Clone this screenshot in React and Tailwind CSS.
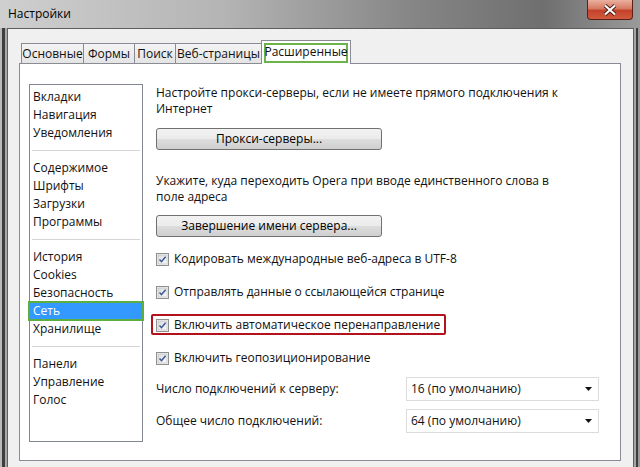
import React from "react";

const sidebarGroups = [
  ["Вкладки", "Навигация", "Уведомления"],
  ["Содержимое", "Шрифты", "Загрузки", "Программы"],
  ["История", "Cookies", "Безопасность", "Сеть", "Хранилище"],
  ["Панели", "Управление", "Голос"],
];

const tabs = [
  { label: "Основные", cls: "w-[63px] border-l" },
  { label: "Формы", cls: "w-[51px]" },
  { label: "Поиск", cls: "w-[41px]" },
  { label: "Веб-страницы", cls: "w-[86px]" },
];

const CheckBox = () => (
  <svg width="13" height="13" viewBox="0 0 13 13" className="shrink-0">
    <defs>
      <linearGradient id="cbg" x1="0" y1="0" x2="1" y2="1">
        <stop offset="0" stopColor="#d9dadb" />
        <stop offset="1" stopColor="#fbfbfb" />
      </linearGradient>
    </defs>
    <rect x="0.5" y="0.5" width="12" height="12" fill="#f4f4f4" stroke="#8e8f8f" />
    <rect x="2" y="2" width="9" height="9" fill="url(#cbg)" stroke="#b7b9bc" strokeWidth="0.6" />
    <path d="M3.5 6.5 L5.5 8.7 L9.6 3.8" fill="none" stroke="#3a5796" strokeWidth="1.5" />
  </svg>
);

const Button = ({ children }) => (
  <button className="flex h-[22px] w-[226px] items-center justify-center rounded-[3px] border border-[#707070] bg-[linear-gradient(to_bottom,#f2f2f2_0%,#ebebeb_50%,#dddddd_51%,#cfcfcf_100%)] text-[12px] text-black">
    {children}
  </button>
);

const CheckRow = ({ label, className, highlight }) => (
  <div className={"relative flex h-[20px] items-center gap-[5px] self-start " + className}>
    <CheckBox />
    <span>{label}</span>
    {highlight && (
      <div className="absolute -left-[5px] -right-[6px] -top-px h-[21px] rounded-[2px] border-2 border-[#b3121c]" />
    )}
  </div>
);

const SelectRow = ({ label, value, className }) => (
  <div className={"flex h-[24px] items-center " + className}>
    <span className="w-[250px]">{label}</span>
    <div className="flex h-[24px] w-[193px] items-center justify-between border border-[#dcdcdc] bg-white pl-[4px] pr-[6px]">
      <span>{value}</span>
      <svg width="7" height="4" viewBox="0 0 7 4">
        <path d="M0 0 H7 L3.5 4 Z" fill="#111" />
      </svg>
    </div>
  </div>
);

export default function App() {
  return (
    <div className="flex h-[467px] w-[640px] flex-col overflow-hidden bg-[linear-gradient(to_right,#cfcfcf_0%,#b4b4b4_35%,#858585_65%,#6f6f6f_85%,#9a9a9a_100%)] font-['Segoe_UI','Open_Sans',sans-serif] text-[12px] text-[#111]">
      {/* title bar */}
      <div className="relative flex h-[28px] shrink-0 items-center pl-[8px] text-black">
        <span>Настройки</span>
        <div className="absolute right-[7px] top-0 flex h-[20px] w-[46px] items-center justify-center rounded-b-[4px] border border-t-0 border-[#5b2117] bg-[linear-gradient(to_bottom,#eab0a0_0%,#d77a62_45%,#c5432b_55%,#cf5a3e_100%)]">
          <svg width="16" height="12" viewBox="0 0 16 12">
            <path d="M3 1.5 L13 10.5 M13 1.5 L3 10.5" stroke="#4a1a12" strokeWidth="4" />
            <path d="M3 1.5 L13 10.5 M13 1.5 L3 10.5" stroke="#fff" strokeWidth="2.2" />
          </svg>
        </div>
      </div>

      <div className="flex flex-1">
        <div className="w-[7px] shrink-0 bg-[linear-gradient(to_right,#b9b9b9_0,#b9b9b9_2px,#3e3e3e_2px,#3e3e3e_5px,#a9a9a9_5px)]" />
        {/* client area */}
        <div className="flex w-[627px] flex-col border border-b-0 border-[#5f5f5f] bg-[#f0f0f0] pt-[11px]">
          {/* tabs */}
          <div className="relative z-10 ml-[11px] flex h-[23px] items-end pl-[2px]">
            {tabs.map((t) => (
              <div
                key={t.label}
                className={
                  "flex h-[20px] items-center justify-center border-t border-r border-[#898c95] bg-[linear-gradient(to_bottom,#f4f4f4,#e4e4e4)] " +
                  t.cls
                }
              >
                {t.label}
              </div>
            ))}
            <div className="-mb-px -ml-px flex h-[24px] w-[90px] items-start border border-b-0 border-[#898c95] bg-white p-[2px] pb-0">
              <div className="flex h-[20px] w-full items-center justify-center border-2 border-[#6bb34a] pb-[2px]">
                Расширенные
              </div>
            </div>
          </div>

          {/* panel */}
          <div className="ml-[11px] flex h-[398px] w-[602px] border border-[#898c95] bg-white pl-[9px] pt-[20px]">
            {/* sidebar */}
            <div className="h-[358px] w-[114px] border border-[#828790] bg-white pt-[3px]">
              {sidebarGroups.map((group, gi) => (
                <div key={gi}>
                  {gi > 0 && <div className="mx-[2px] my-[8px] h-px bg-[#d5d5d5]" />}
                  {group.map((item) =>
                    item === "Сеть" ? (
                      <div
                        key={item}
                        className="-mx-px h-[18px] bg-[#3399ff] pl-[4px] leading-[18px] text-white outline-2 -outline-offset-1 outline-[#5cae3e]"
                      >
                        {item}
                      </div>
                    ) : (
                      <div key={item} className="h-[18px] pl-[3px] leading-[18px]">
                        {item}
                      </div>
                    )
                  )}
                </div>
              ))}
            </div>

            {/* content */}
            <div className="ml-[13px] flex w-[443px] flex-col">
              <p className="mt-px leading-[16px]">
                Настройте прокси-серверы, если не имеете прямого подключения к
                <br />
                Интернет
              </p>
              <div className="mt-[11px]">
                <Button>Прокси-серверы...</Button>
              </div>
              <p className="mt-[23px] leading-[16px]">
                Укажите, куда переходить Opera при вводе единственного слова в
                <br />
                поле адреса
              </p>
              <div className="mt-[10px]">
                <Button>Завершение имени сервера...</Button>
              </div>
              <CheckRow className="mt-[12px]" label="Кодировать международные веб-адреса в UTF-8" />
              <CheckRow className="mt-[13px]" label="Отправлять данные о ссылающейся странице" />
              <CheckRow className="mt-[13px]" label="Включить автоматическое перенаправление" highlight />
              <CheckRow className="mt-[13px]" label="Включить геопозиционирование" />
              <SelectRow className="mt-[9px]" label="Число подключений к серверу:" value="16 (по умолчанию)" />
              <SelectRow className="mt-[8px]" label="Общее число подключений:" value="64 (по умолчанию)" />
            </div>
          </div>
        </div>
        <div className="w-[6px] shrink-0 bg-[linear-gradient(to_right,#a5a5a5_0,#a5a5a5_2px,#3e3e3e_2px,#3e3e3e_4px,#9a9a9a_4px)]" />
      </div>
    </div>
  );
}
